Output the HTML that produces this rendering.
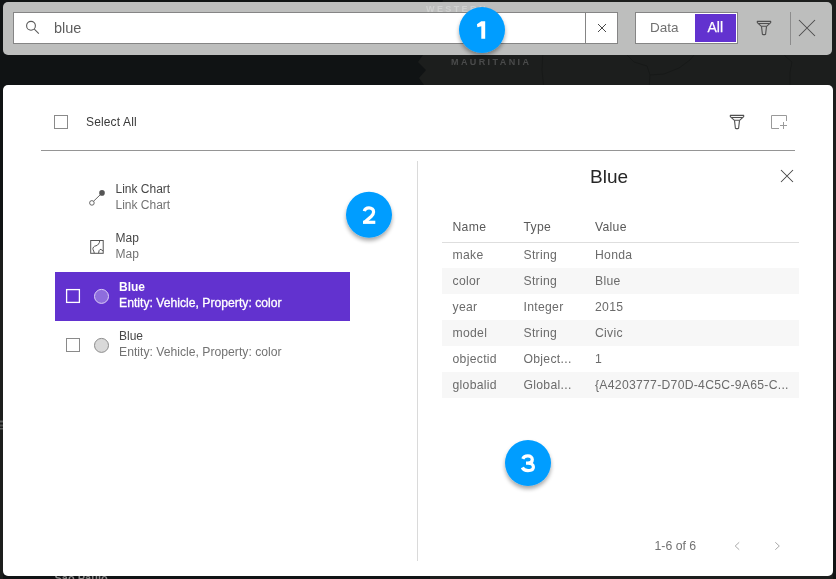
<!DOCTYPE html>
<html><head><meta charset="utf-8">
<style>
*{box-sizing:border-box;margin:0;padding:0}
html,body{width:836px;height:579px;overflow:hidden;background:#101314}
svg{position:absolute;left:0;top:0;display:block;will-change:transform}
text{font-family:"Liberation Sans",sans-serif;white-space:pre}
</style></head>
<body>
<svg width="836" height="579" viewBox="0 0 836 579">
<defs>
<filter id="sh" x="-30%" y="-30%" width="160%" height="170%">
<feGaussianBlur in="SourceAlpha" stdDeviation="2"/>
<feOffset dy="3" result="b"/>
<feComponentTransfer><feFuncA type="linear" slope="0.35"/></feComponentTransfer>
<feMerge><feMergeNode/><feMergeNode in="SourceGraphic"/></feMerge>
</filter>
</defs>

<!-- map background -->
<rect x="0" y="0" width="836" height="579" fill="#101314"/>
<path d="M443 0 L836 0 L836 330 L833 579 L430 579 L424 85 L419 78 L426 70 L418 62 L423 55Z" fill="#1c1e1d"/>
<path d="M543 50 L542 70 L544 90 M622 50 L628 56 L634 62 L647 66 L650 75 L664 74 L679 68 L690 60 L698 50 M650 75 L649 90 M783 50 L785 56 L792 62 L790 72 L790 90" stroke="#171918" stroke-width="1" fill="none"/>
<rect x="0" y="250" width="3" height="329" fill="#1c1e1d"/><rect x="0" y="420.5" width="3" height="2" fill="#5a5c5b"/><rect x="0" y="424.5" width="3" height="2" fill="#4e504f"/><rect x="0" y="428" width="3" height="1.5" fill="#5a5c5b"/>
<text x="451" y="65" font-size="9" font-weight="bold" fill="#4a4b4b" letter-spacing="2.4">MAURITANIA</text>
<text x="54.5" y="582.3" font-size="11" font-weight="bold" fill="#8a8a8a" letter-spacing="0">Sao Paulo</text>

<!-- top bar -->
<rect x="3" y="2" width="829" height="53" rx="5" fill="#bdbebd"/>
<text x="426" y="11.5" font-size="9" font-weight="bold" fill="#cfd0cf" letter-spacing="2.4">WESTERN</text>
<rect x="13.5" y="12.5" width="604" height="31" fill="#fff" stroke="#858585" stroke-width="1"/>
<line x1="585.5" y1="12" x2="585.5" y2="44" stroke="#858585"/>
<circle cx="31" cy="25.8" r="4.4" fill="none" stroke="#5a5a5a" stroke-width="1.1"/>
<line x1="34.3" y1="29.1" x2="38.8" y2="33.6" stroke="#5a5a5a" stroke-width="1.1"/>
<text x="54" y="32.7" font-size="14.5" fill="#5e5e5e">blue</text>
<path d="M598 24L606 32M606 24L598 32" stroke="#4a4a4a" stroke-width="1"/>

<rect x="635.5" y="12.5" width="102" height="31" fill="#fff" stroke="#858585"/>
<rect x="695" y="14" width="41" height="28" fill="#6232cf"/>
<text x="650" y="32" font-size="13.5" fill="#707070">Data</text>
<text x="707.5" y="32" font-size="14" fill="#fff" stroke="#fff" stroke-width="0.25">All</text>
<g transform="translate(754 18)" fill="none" stroke="#4f4f4f" stroke-width="1.1" stroke-linejoin="round">
<path d="M3.3 3.4H16.7V4.6L12.6 8.3H7.4L3.3 4.6Z"/>
<path d="M4.3 5.5H15.7"/>
<path d="M7.5 8.4L8.4 16.2Q10 17.1 11.6 16.2L12.5 8.4"/>
</g>
<line x1="790.5" y1="12" x2="790.5" y2="45" stroke="#8c8c8c"/>
<path d="M799 20L815 36M815 20L799 36" stroke="#4a4a4a" stroke-width="1.05"/>

<!-- panel -->
<rect x="3" y="85" width="830" height="491" rx="5" fill="#fff"/>
<rect x="54.5" y="115.5" width="13" height="13" fill="#fff" stroke="#8a8a8a"/>
<text x="86" y="126" font-size="12" fill="#3a3a3a" letter-spacing="0.15">Select All</text>
<g transform="translate(727 112)" fill="none" stroke="#4f4f4f" stroke-width="1.1" stroke-linejoin="round">
<path d="M3.3 3.4H16.7V4.6L12.6 8.3H7.4L3.3 4.6Z"/>
<path d="M4.3 5.5H15.7"/>
<path d="M7.5 8.4L8.4 16.2Q10 17.1 11.6 16.2L12.5 8.4"/>
</g>
<path d="M779 128.5H771.5V115.5H786.5V121M780 125.5H787M783.5 122V129" fill="none" stroke="#9a9a9a" stroke-width="1"/>
<line x1="41" y1="150.5" x2="795" y2="150.5" stroke="#959595"/>
<line x1="417.5" y1="161" x2="417.5" y2="561" stroke="#dadada"/>

<!-- left list -->
<circle cx="102" cy="192.9" r="2.8" fill="#555"/>
<circle cx="91.9" cy="202.9" r="2.3" fill="none" stroke="#555" stroke-width="0.9"/>
<line x1="100.2" y1="194.8" x2="93.6" y2="201.2" stroke="#555" stroke-width="0.9"/>
<text x="115.5" y="193" font-size="12" fill="#474747">Link Chart</text>
<text x="115.5" y="209" font-size="12" fill="#737373">Link Chart</text>

<rect x="90.7" y="240.5" width="12.5" height="12.8" fill="none" stroke="#555" stroke-width="1"/>
<path d="M99.7 240.8Q99.5 243 98.5 244Q97.5 245.5 96 245.8Q94.5 246 93.6 247Q92.5 248.5 93 249.6Q93.8 250.8 94.3 253.2M98.6 253.2Q98.8 250 100 249.5Q101.2 249 102 250.3L103.2 250.9" fill="none" stroke="#555" stroke-width="1"/>
<text x="115.5" y="242" font-size="12" fill="#474747">Map</text>
<text x="115.5" y="258" font-size="12" fill="#737373">Map</text>

<rect x="55" y="272" width="295" height="49" fill="#6232cf"/>
<rect x="66.6" y="289.6" width="12.8" height="12.8" fill="none" stroke="#fff" stroke-width="1.3"/>
<circle cx="101.5" cy="296.4" r="7" fill="#8e6ddd" stroke="#dccff7" stroke-width="1"/>
<text x="119" y="291" font-size="12" font-weight="bold" fill="#fff">Blue</text>
<text x="119" y="307" font-size="12.2" fill="#fff" stroke="#fff" stroke-width="0.3">Entity: Vehicle, Property: color</text>

<rect x="66.5" y="338.5" width="13" height="13" fill="#fff" stroke="#8a8a8a"/>
<circle cx="101.5" cy="345.4" r="7" fill="#d9d9d9" stroke="#8c8c8c" stroke-width="1"/>
<text x="119" y="340" font-size="12" fill="#474747">Blue</text>
<text x="119" y="356" font-size="12.2" fill="#737373">Entity: Vehicle, Property: color</text>

<!-- right details -->
<text x="609" y="183" font-size="19" fill="#262626" text-anchor="middle">Blue</text>
<path d="M781 170L793 182M793 170L781 182" stroke="#454545" stroke-width="1.05"/>

<line x1="442" y1="242.5" x2="799" y2="242.5" stroke="#dedede"/>
<rect x="442" y="268" width="357" height="26" fill="#f7f7f7"/>
<rect x="442" y="320" width="357" height="26" fill="#f7f7f7"/>
<rect x="442" y="372" width="357" height="26" fill="#f7f7f7"/>
<g font-size="12.2" fill="#5a5a5a" letter-spacing="0.3">
<text x="452.5" y="231">Name</text><text x="523.5" y="231">Type</text><text x="595" y="231">Value</text>
</g>
<g font-size="12.2" fill="#6b6b6b" letter-spacing="0.3">
<text x="452.5" y="259">make</text><text x="523.5" y="259">String</text><text x="595" y="259">Honda</text>
<text x="452.5" y="285">color</text><text x="523.5" y="285">String</text><text x="595" y="285">Blue</text>
<text x="452.5" y="311">year</text><text x="523.5" y="311">Integer</text><text x="595" y="311">2015</text>
<text x="452.5" y="337">model</text><text x="523.5" y="337">String</text><text x="595" y="337">Civic</text>
<text x="452.5" y="363">objectid</text><text x="523.5" y="363">Object...</text><text x="595" y="363">1</text>
<text x="452.5" y="389">globalid</text><text x="523.5" y="389">Global...</text><text x="595" y="389" letter-spacing="0.28">{A4203777-D70D-4C5C-9A65-C...</text>
</g>

<text x="654.5" y="550" font-size="12.3" fill="#727272">1-6 of 6</text>
<path d="M739.2 542.3L735.2 546L739.2 549.7" fill="none" stroke="#aaa" stroke-width="1"/>
<path d="M775.3 542.3L779.3 546L775.3 549.7" fill="none" stroke="#aaa" stroke-width="1"/>

<!-- badges -->
<g filter="url(#sh)">
<circle cx="482" cy="30" r="23" fill="#009dff"/>
<circle cx="369" cy="214.7" r="23" fill="#009dff"/>
<circle cx="528" cy="463" r="23" fill="#009dff"/>
</g>
<path d="M476.9 24.3L481.3 21.3H485.2V38.7H481.3V26.2L477.4 27.3Z" fill="#fff"/>
<path d="M364.3 211.2C364.8 209 366.5 207.9 369 207.9C371.8 207.9 373.6 209.6 373.6 212C373.6 213.8 372.6 215.2 371.2 216.5L364.6 222.2" fill="none" stroke="#fff" stroke-width="3.2"/><path d="M363 222.3H375.3" stroke="#fff" stroke-width="3.2"/>
<path d="M522.8 458.8C523.5 457 525.4 455.9 527.8 455.9C530.6 455.9 532.3 457.5 532.3 459.5C532.3 461.7 530.6 463.2 528 463.2H526M528 463.2C531.3 463.2 533.4 464.8 533.4 467C533.4 469.3 531.2 470.6 528 470.6C525.2 470.6 523.2 469.5 522.3 467.5" fill="none" stroke="#fff" stroke-width="3.2"/>
</svg>
</body></html>
